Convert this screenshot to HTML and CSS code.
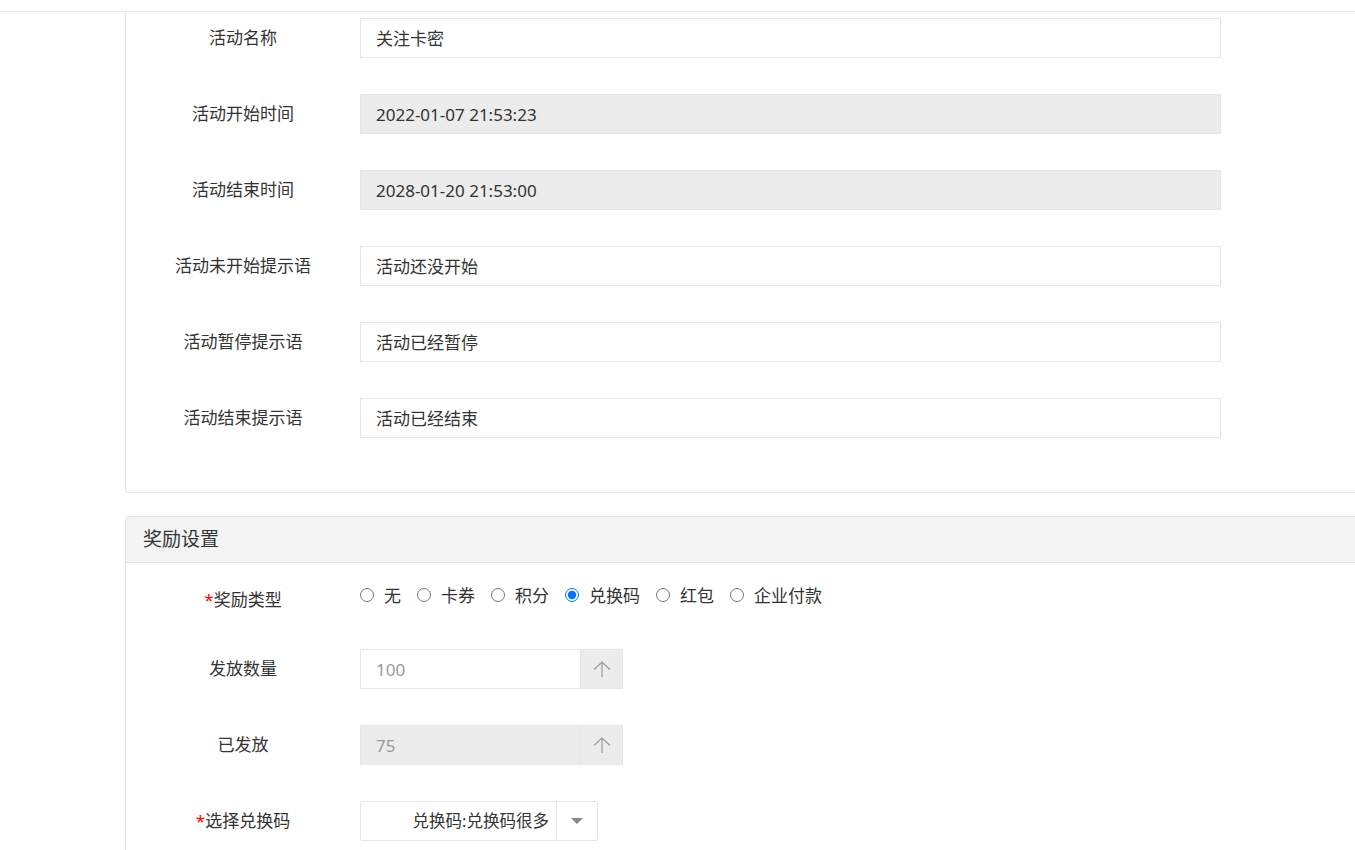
FILE: index.html
```html
<!DOCTYPE html>
<html lang="zh-CN">
<head>
<meta charset="utf-8">
<title>活动设置</title>
<link rel="stylesheet" href="styles.css">
</head>
<body>
<div class="topbar"></div>
<div class="page">
  <section class="panel panel-first">
    <div class="panel-body body-first">
      <div class="row">
        <div class="label">活动名称</div>
        <div class="field"><div class="input">关注卡密</div></div>
      </div>
      <div class="row">
        <div class="label">活动开始时间</div>
        <div class="field"><div class="input disabled">2022-01-07 21:53:23</div></div>
      </div>
      <div class="row">
        <div class="label">活动结束时间</div>
        <div class="field"><div class="input disabled">2028-01-20 21:53:00</div></div>
      </div>
      <div class="row">
        <div class="label">活动未开始提示语</div>
        <div class="field"><div class="input">活动还没开始</div></div>
      </div>
      <div class="row">
        <div class="label">活动暂停提示语</div>
        <div class="field"><div class="input">活动已经暂停</div></div>
      </div>
      <div class="row">
        <div class="label">活动结束提示语</div>
        <div class="field"><div class="input">活动已经结束</div></div>
      </div>
    </div>
  </section>

  <section class="panel panel-second">
    <header class="panel-head">奖励设置</header>
    <div class="panel-body body-second">
      <div class="row">
        <div class="label label-low"><span class="req">*</span>奖励类型</div>
        <div class="field radios">
          <label class="radio"><input type="radio" name="t"><span>无</span></label>
          <label class="radio"><input type="radio" name="t"><span>卡券</span></label>
          <label class="radio"><input type="radio" name="t"><span>积分</span></label>
          <label class="radio"><input type="radio" name="t" checked><span>兑换码</span></label>
          <label class="radio"><input type="radio" name="t"><span>红包</span></label>
          <label class="radio"><input type="radio" name="t"><span>企业付款</span></label>
        </div>
      </div>
      <div class="row">
        <div class="label">发放数量</div>
        <div class="field">
          <div class="number">
            <div class="num-val">100</div>
            <div class="num-btn"><svg width="18" height="18" viewBox="0 0 18 18"><path d="M1 9.5 L9 2 L17 9.5 M9 2 V17" fill="none" stroke="#9a9a9a" stroke-width="1.2"/></svg></div>
          </div>
        </div>
      </div>
      <div class="row">
        <div class="label">已发放</div>
        <div class="field">
          <div class="number number-disabled">
            <div class="num-val">75</div>
            <div class="num-btn"><svg width="18" height="18" viewBox="0 0 18 18"><path d="M1 9.5 L9 2 L17 9.5 M9 2 V17" fill="none" stroke="#9a9a9a" stroke-width="1.2"/></svg></div>
          </div>
        </div>
      </div>
      <div class="row">
        <div class="label"><span class="req">*</span>选择兑换码</div>
        <div class="field">
          <div class="select">
            <div class="sel-text">兑换码:兑换码很多</div>
            <div class="sel-btn"><span class="caret"></span></div>
          </div>
        </div>
      </div>
    </div>
  </section>
</div>
</body>
</html>
```

FILE: styles.css
```css
* { box-sizing: border-box; }
html, body { margin: 0; padding: 0; }
body {
  background: #fff;
  color: #333;
  font-family: "Noto Sans", "Noto Sans CJK SC", sans-serif;
  font-size: 17px;
  overflow: hidden;
  width: 1355px;
  height: 850px;
}
.topbar {
  height: 12px;
  border-bottom: 1px solid #e6e6e6;
}
.page {
  padding-left: 125px;
  margin-right: -30px;
}
.panel {
  border: 1px solid #e2e2e2;
  border-radius: 4px;
  background: #fff;
}
.panel-first {
  border-top: none;
  border-top-left-radius: 0;
  border-top-right-radius: 0;
}
.panel-second {
  margin-top: 23px;
}
.panel-head {
  height: 46px;
  line-height: 45px;
  background: #f4f4f4;
  border-bottom: 1px solid #e2e2e2;
  padding-left: 17px;
  font-size: 19px;
  color: #333;
  border-top-left-radius: 4px;
}
.body-first { padding: 6px 0 54px; }
.body-second { padding: 10px 0 20px; }
.row {
  display: flex;
  align-items: flex-start;
  height: 40px;
  margin-bottom: 36px;
}
.row:last-child { margin-bottom: 0; }
.label {
  width: 234px;
  text-align: center;
  line-height: 40px;
  font-size: 17px;
  color: #333;
  flex: none;
}
.label-low { padding-top: 7px; }
.req { color: #ff0000; }
.field { flex: none; }
.input {
  width: 861px;
  height: 40px;
  line-height: 38px;
  padding-top: 1px;
  border: 1px solid #e6e6e6;
  padding-left: 15px;
  color: #333;
  background: #fff;
  overflow: hidden;
}
.input.disabled {
  background: #ececec;
}
.radios {
  display: flex;
  align-items: center;
  height: 40px;
  padding-top: 3px;
}
.radio {
  display: flex;
  align-items: center;
  margin-right: 16px;
}
.radio input {
  margin: 0 10px 0 0;
  width: 14px;
  height: 14px;
}
.number {
  display: flex;
  width: 263px;
  height: 40px;
  border: 1px solid #e6e6e6;
  background: #fff;
}
.num-val {
  flex: 1;
  line-height: 38px;
  padding-top: 1px;
  padding-left: 15px;
  color: #999;
}
.number-disabled { background: #ececec; }
.num-btn {
  width: 42px;
  background: #ececec;
  border-left: 1px solid #e6e6e6;
  display: flex;
  align-items: center;
  justify-content: center;
}
.select {
  display: flex;
  width: 238px;
  height: 40px;
  border: 1px solid #e6e6e6;
  border-radius: 2px;
  background: #fff;
}
.sel-text {
  flex: 1;
  line-height: 38px;
  text-align: right;
  padding-right: 7px;
  font-size: 16.5px;
  color: #333;
  white-space: nowrap;
}
.sel-btn {
  width: 41px;
  flex: none;
  border-left: 1px solid #e6e6e6;
  display: flex;
  align-items: center;
  justify-content: center;
}
.caret {
  width: 0;
  height: 0;
  border-left: 6px solid transparent;
  border-right: 6px solid transparent;
  border-top: 6px solid #888;
}
```
